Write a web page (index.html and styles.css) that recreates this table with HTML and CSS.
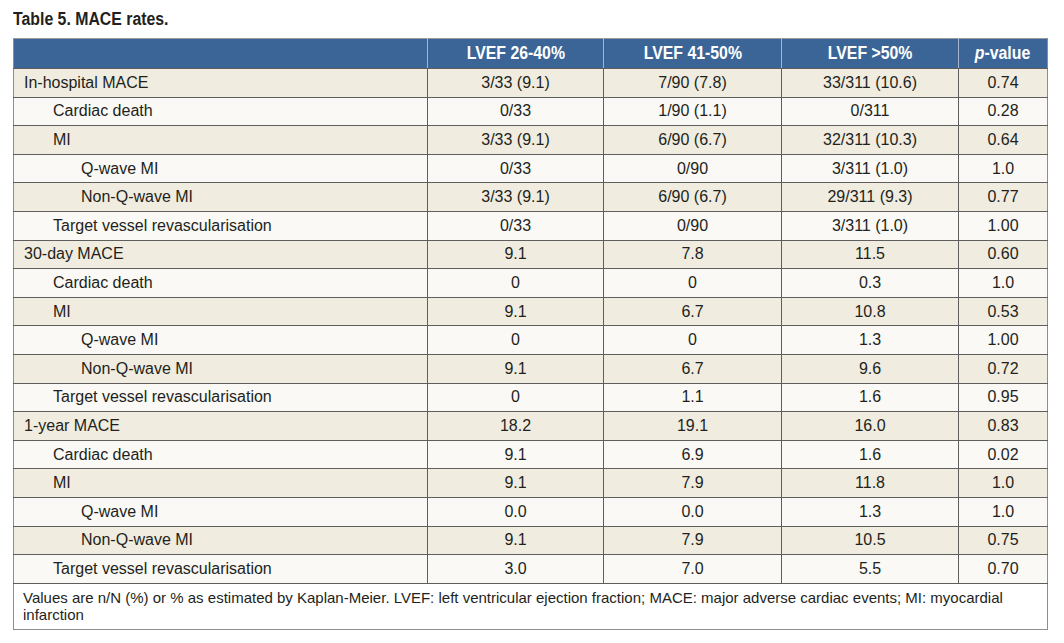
FILE: index.html
```html
<!DOCTYPE html>
<html lang="en">
<head>
<meta charset="utf-8">
<title>Table 5. MACE rates.</title>
<link rel="stylesheet" href="styles.css">
</head>
<body>
<div class="page">
  <h1 class="caption"><span class="cond">Table 5. MACE rates.</span></h1>
  <table class="mace">
    <colgroup>
      <col class="c-label"><col class="c-a"><col class="c-b"><col class="c-c"><col class="c-p">
    </colgroup>
    <thead>
      <tr>
        <th></th>
        <th><span class="cond">LVEF 26-40%</span></th>
        <th><span class="cond">LVEF 41-50%</span></th>
        <th><span class="cond">LVEF &gt;50%</span></th>
        <th><span class="cond"><i>p</i>-value</span></th>
      </tr>
    </thead>
    <tbody>
      <tr class="odd"><td class="l0">In-hospital MACE</td><td>3/33 (9.1)</td><td>7/90 (7.8)</td><td>33/311 (10.6)</td><td>0.74</td></tr>
      <tr class="even"><td class="l1">Cardiac death</td><td>0/33</td><td>1/90 (1.1)</td><td>0/311</td><td>0.28</td></tr>
      <tr class="odd"><td class="l1">MI</td><td>3/33 (9.1)</td><td>6/90 (6.7)</td><td>32/311 (10.3)</td><td>0.64</td></tr>
      <tr class="even"><td class="l2">Q-wave MI</td><td>0/33</td><td>0/90</td><td>3/311 (1.0)</td><td>1.0</td></tr>
      <tr class="odd"><td class="l2">Non-Q-wave MI</td><td>3/33 (9.1)</td><td>6/90 (6.7)</td><td>29/311 (9.3)</td><td>0.77</td></tr>
      <tr class="even"><td class="l1">Target vessel revascularisation</td><td>0/33</td><td>0/90</td><td>3/311 (1.0)</td><td>1.00</td></tr>
      <tr class="odd"><td class="l0">30-day MACE</td><td>9.1</td><td>7.8</td><td>11.5</td><td>0.60</td></tr>
      <tr class="even"><td class="l1">Cardiac death</td><td>0</td><td>0</td><td>0.3</td><td>1.0</td></tr>
      <tr class="odd"><td class="l1">MI</td><td>9.1</td><td>6.7</td><td>10.8</td><td>0.53</td></tr>
      <tr class="even"><td class="l2">Q-wave MI</td><td>0</td><td>0</td><td>1.3</td><td>1.00</td></tr>
      <tr class="odd"><td class="l2">Non-Q-wave MI</td><td>9.1</td><td>6.7</td><td>9.6</td><td>0.72</td></tr>
      <tr class="even"><td class="l1">Target vessel revascularisation</td><td>0</td><td>1.1</td><td>1.6</td><td>0.95</td></tr>
      <tr class="odd"><td class="l0">1-year MACE</td><td>18.2</td><td>19.1</td><td>16.0</td><td>0.83</td></tr>
      <tr class="even"><td class="l1">Cardiac death</td><td>9.1</td><td>6.9</td><td>1.6</td><td>0.02</td></tr>
      <tr class="odd"><td class="l1">MI</td><td>9.1</td><td>7.9</td><td>11.8</td><td>1.0</td></tr>
      <tr class="even"><td class="l2">Q-wave MI</td><td>0.0</td><td>0.0</td><td>1.3</td><td>1.0</td></tr>
      <tr class="odd"><td class="l2">Non-Q-wave MI</td><td>9.1</td><td>7.9</td><td>10.5</td><td>0.75</td></tr>
      <tr class="even"><td class="l1">Target vessel revascularisation</td><td>3.0</td><td>7.0</td><td>5.5</td><td>0.70</td></tr>
    </tbody>
    <tfoot>
      <tr>
        <td colspan="5" class="note"><span class="line1">Values are n/N (%) or % as estimated by Kaplan-Meier. LVEF: left ventricular ejection fraction; MACE: major adverse cardiac events; MI: myocardial</span><br>infarction</td>
      </tr>
    </tfoot>
  </table>
</div>
</body>
</html>
```

FILE: styles.css
```css
html, body {
  margin: 0;
  padding: 0;
  background: #ffffff;
}

.page {
  padding: 8px 0 0 13px;
  font-family: "Liberation Sans", Arial, sans-serif;
  color: #231f20;
}

.cond {
  display: inline-block;
  transform: scaleX(0.88);
}

.caption {
  margin: 0 0 8px 0;
  font-family: "Liberation Sans", Arial, sans-serif;
  font-weight: bold;
  font-size: 18px;
  line-height: 22px;
  color: #231f20;
}

.caption .cond {
  transform-origin: left center;
}

.mace {
  border-collapse: collapse;
  table-layout: fixed;
  width: 1034px;
  font-size: 16px;
}

.c-label { width: 414px; }
.c-a { width: 176px; }
.c-b { width: 178px; }
.c-c { width: 177px; }
.c-p { width: 89px; }

.mace thead th {
  background: #3b6597;
  color: #ffffff;
  font-family: "Liberation Sans", Arial, sans-serif;
  font-weight: bold;
  font-size: 18px;
  height: 29px;
  padding: 0;
  text-align: center;
  vertical-align: middle;
  border-top: 1px solid #9a9a9a;
  border-left: 1px solid #a6b6cb;
  border-right: 1px solid #a6b6cb;
  border-bottom: 1px solid #5e5e5e;
}

.mace thead th .cond {
  transform-origin: center center;
}

.mace thead th:first-child { border-left-color: #8d8d8d; }
.mace thead th:last-child { border-right-color: #8d8d8d; }

.mace tbody td {
  height: 27.6px;
  padding: 0;
  text-align: center;
  vertical-align: middle;
  border: 1px solid #5e5e5e;
  line-height: 18px;
}

.mace tbody td:first-child { border-left-color: #8d8d8d; }
.mace tbody td:last-child { border-right-color: #8d8d8d; }

.mace tbody tr.odd td { background: #f0ecdf; }
.mace tbody tr.even td { background: #faf9f5; }

.mace tbody td.l0 { text-align: left; padding-left: 10px; }
.mace tbody td.l1 { text-align: left; padding-left: 39px; }
.mace tbody td.l2 { text-align: left; padding-left: 67px; }

.mace tfoot td.note {
  background: #ffffff;
  text-align: left;
  padding: 5px 9px 6px 9px;
  font-size: 15px;
  line-height: 17px;
  border: 1px solid #8d8d8d;
  border-top: 1px solid #5e5e5e;
}

.line1 { white-space: nowrap; }
```
